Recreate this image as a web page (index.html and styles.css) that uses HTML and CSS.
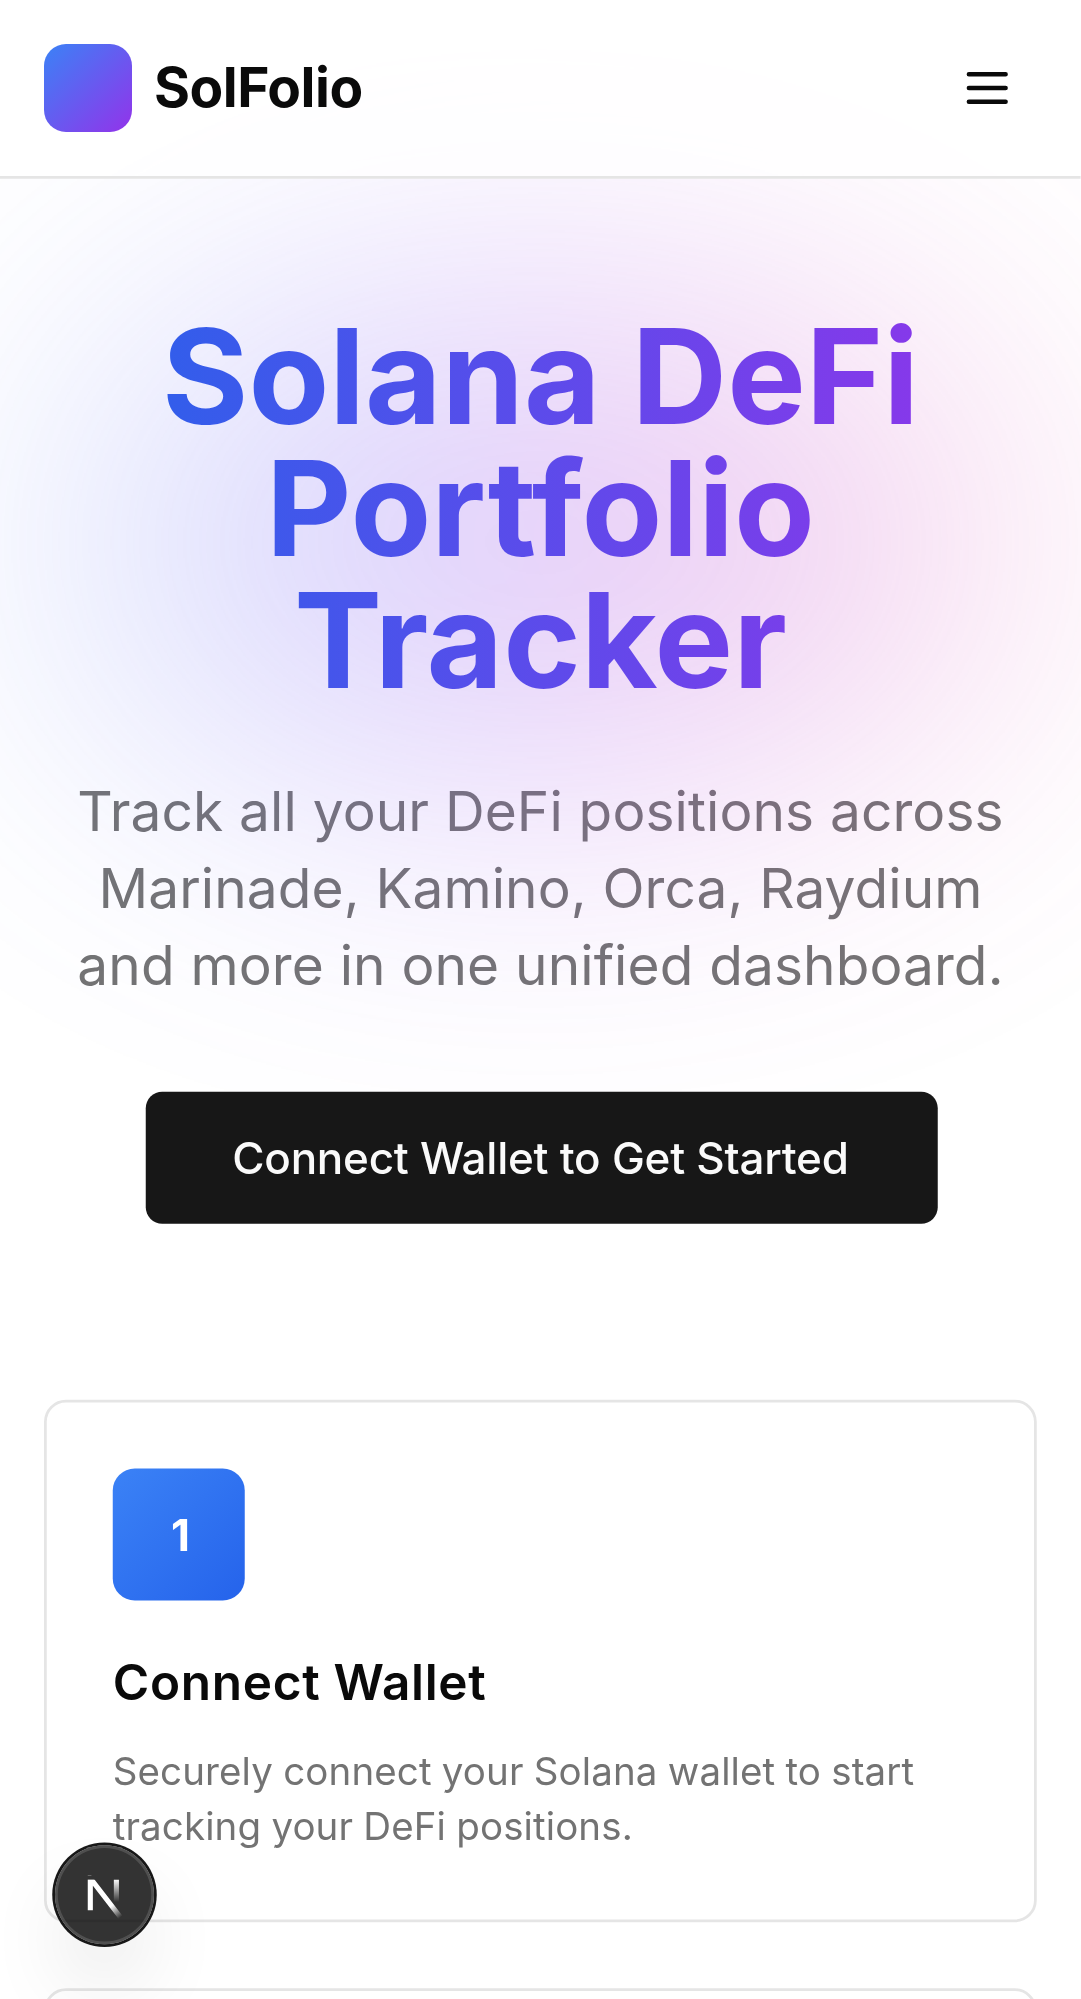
FILE: index.html
```html
<!DOCTYPE html>
<html lang="en">
<head>
<meta charset="utf-8">
<title>SolFolio</title>
<link rel="stylesheet" href="styles.css">
</head>
<body>
<div class="screen">
  <header class="header">
    <div class="brand">
      <span class="brand-mark"></span>
      <span class="brand-name">SolFolio</span>
    </div>
    <button class="menu-button" aria-label="Menu">
      <svg width="20" height="20" viewBox="0 0 24 24" fill="none" stroke="currentColor" stroke-width="2" stroke-linecap="round"><path d="M4 6h16M4 12h16M4 18h16"/></svg>
    </button>
  </header>
  <main class="main">
    <section class="hero">
      <div class="title-wrap">
        <div class="glow"></div>
        <h1 class="title">Solana DeFi Portfolio Tracker</h1>
      </div>
      <p class="subtitle">Track all your DeFi positions across Marinade, Kamino, Orca, Raydium and more in one unified dashboard.</p>
      <button class="cta">Connect Wallet to Get Started</button>
    </section>
    <section class="steps">
      <article class="card">
        <div class="step-number">1</div>
        <h3 class="card-title">Connect Wallet</h3>
        <p class="card-text">Securely connect your Solana wallet to start tracking your DeFi positions.</p>
      </article>
      <article class="card card-next"></article>
    </section>
  </main>
  <div class="badge">
    <svg class="badge-mark" width="40" height="40" viewBox="0 0 40 40" fill="none">
      <defs>
        <linearGradient id="diagonal" x1="9.95555" y1="11.1226" x2="15.4778" y2="17.9671" gradientUnits="userSpaceOnUse">
          <stop stop-color="white"/>
          <stop offset="0.604072" stop-color="white" stop-opacity="0"/>
          <stop offset="1" stop-color="white" stop-opacity="0"/>
        </linearGradient>
        <linearGradient id="stem" x1="11.8222" y1="1.40039" x2="11.791" y2="9.62542" gradientUnits="userSpaceOnUse">
          <stop stop-color="white"/>
          <stop offset="1" stop-color="white" stop-opacity="0"/>
        </linearGradient>
        <mask id="top-cut">
          <rect width="100%" height="100%" fill="white"/>
          <rect width="5" height="1.5" fill="black"/>
        </mask>
      </defs>
      <g transform="translate(12.5 13)">
        <path d="M13.3 15.2 L2.34 1 V12.6" stroke="url(#diagonal)" stroke-width="1.86" mask="url(#top-cut)"/>
        <path d="M11.825 1.5 V9.6" stroke="url(#stem)" stroke-width="1.86"/>
      </g>
    </svg>
  </div>
</div>
</body>
</html>
```
FILE: styles.css
```css
*, *::before, *::after { box-sizing: border-box; }
html, body { margin: 0; overflow: hidden; background: #fff; }
body { height: 1999px; font-family: Inter, "Liberation Sans", sans-serif; color: #0a0a0a; }
h1, h3, p { margin: 0; }
button { border: 0; padding: 0; font: inherit; color: inherit; background: none; }
svg { display: block; }

/* Phone viewport: laid out at 393px and shown at 2.75x */
.screen {
  position: relative;
  width: 393.09px;
  height: 726.9px;
  overflow: hidden;
  transform: scale(2.75);
  transform-origin: 0 0;
  background: #fff;
}

.header {
  position: relative;
  z-index: 2;
  display: flex;
  align-items: center;
  justify-content: space-between;
  height: 65px;
  padding: 0 16px;
  border-bottom: 1px solid #e5e5e5;
  background: rgba(255, 255, 255, 0.8);
}
.brand { display: flex; align-items: center; gap: 8px; }
.brand-mark { width: 32px; height: 32px; border-radius: 8px; background: linear-gradient(to bottom right, #3b82f6, #9333ea); }
.brand-name { font-size: 20px; line-height: 28px; font-weight: 700; letter-spacing: -0.18px; }
.menu-button { display: flex; align-items: center; justify-content: center; width: 36px; height: 36px; }

.main { padding: 48px 16px 0; }
.hero { display: flex; flex-direction: column; align-items: center; text-align: center; }
.title-wrap { position: relative; width: 100%; padding-bottom: 24px; }
.glow {
  position: absolute;
  inset: -8px 12px;
  border-radius: 50%;
  background: linear-gradient(to right, #3b82f6, #a855f7, #ec4899);
  opacity: 0.3;
  filter: blur(64px);
}
.title {
  position: relative;
  font-size: 48px;
  line-height: 48px;
  font-weight: 700;
  color: transparent;
  background: linear-gradient(to right, #2563eb, #9333ea);
  background-clip: text;
  -webkit-background-clip: text;
}
.subtitle { font-size: 20px; line-height: 28px; letter-spacing: 0.03px; word-spacing: 0.1px; color: #737373; }
.cta {
  position: relative;
  left: 0.4px;
  width: 288px;
  height: 48px;
  margin-top: 32px;
  padding-right: 0.8px;
  border-radius: 6px;
  background: #171717;
  color: #fafafa;
  font-size: 16px;
  line-height: 24px;
  font-weight: 500;
  letter-spacing: -0.09px;
}

.steps { display: grid; gap: 24px; margin-top: 64px; }
.card { padding: 24px; border: 1px solid #e5e5e5; border-radius: 8px; }
.card-next { height: 190px; }
.step-number {
  display: flex;
  align-items: center;
  justify-content: center;
  width: 48px;
  height: 48px;
  padding-left: 1.2px;
  border-radius: 8px;
  background: linear-gradient(to bottom right, #3b82f6, #2563eb);
  color: #fff;
  font-weight: 700;
  font-size: 16px;
  line-height: 24px;
}
.card-title { margin-top: 16px; font-size: 18px; line-height: 28px; font-weight: 600; letter-spacing: 0.25px; }
.card-text { margin-top: 8px; font-size: 14px; line-height: 20px; letter-spacing: 0.04px; word-spacing: -0.25px; color: #737373; }

.badge {
  position: absolute;
  left: 20px;
  bottom: 20px;
  display: flex;
  align-items: center;
  justify-content: center;
  width: 36px;
  height: 36px;
  border-radius: 50%;
  background: rgba(0, 0, 0, 0.8);
  box-shadow: 0 0 0 1px #171717, inset 0 0 0 1px rgba(255, 255, 255, 0.14), 0 16px 32px -8px rgba(0, 0, 0, 0.24);
}
.badge-mark { flex: none; }
```
